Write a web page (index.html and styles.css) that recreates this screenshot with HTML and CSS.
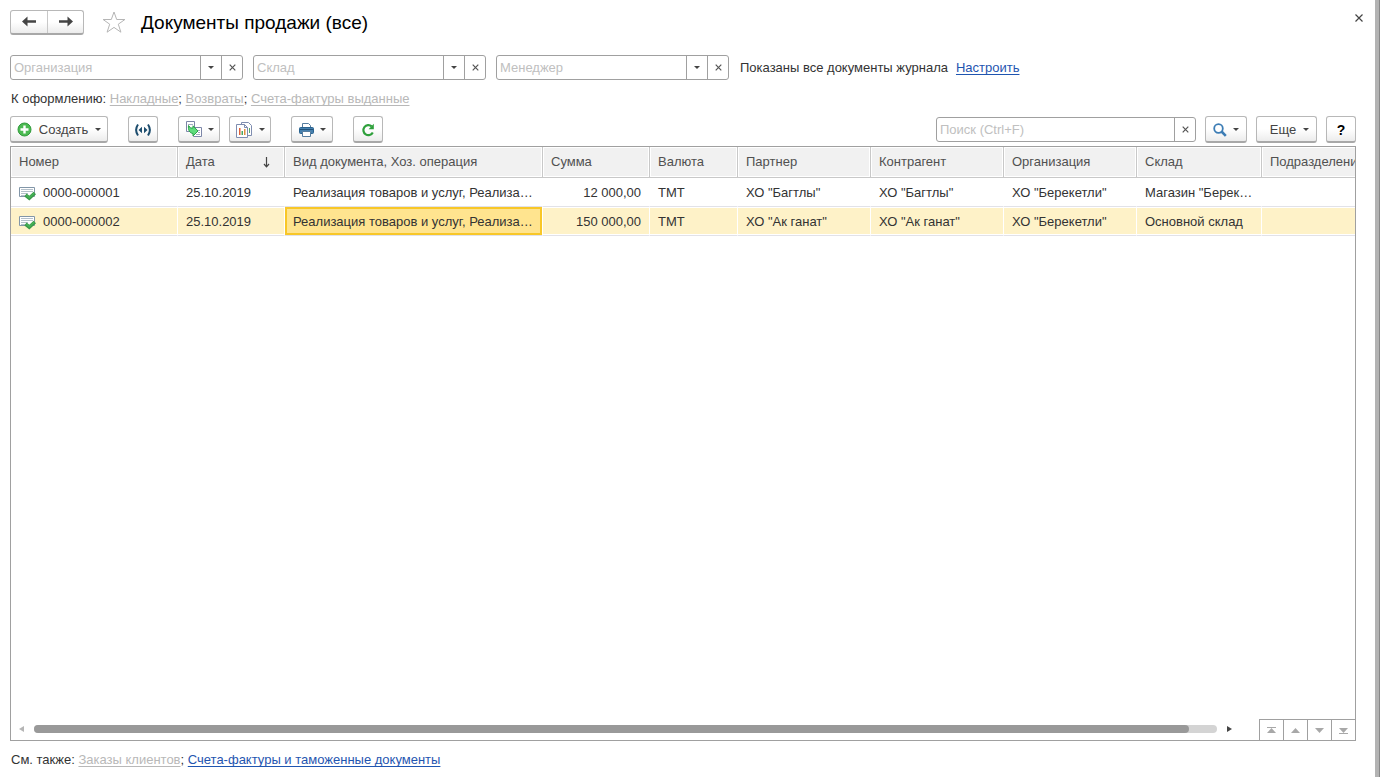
FILE: index.html
```html
<!DOCTYPE html>
<html lang="ru">
<head>
<meta charset="utf-8">
<title>Документы продажи (все)</title>
<link rel="stylesheet" href="styles.css">
</head>
<body>
<svg class="symbols" aria-hidden="true">
  <symbol id="caret" viewBox="0 0 6 3"><path d="M0 0h6L3 3z" fill="currentColor"/></symbol>
  <symbol id="cross" viewBox="0 0 7 7"><path d="M.7.7l5.600 5.600M6.300.7L.7 6.300" stroke="currentColor" stroke-width="1.200" fill="none"/></symbol>
  <symbol id="posted" viewBox="0 0 17 15"><path d="M.5 1.500h15v9H.5z" fill="#fff" stroke="#8296a8"/><path d="M2 3.500h12M2 5.500h12M2 7.500h7M2 9.500h6" stroke="#b4c0ca"/><path d="M6.500 9l3.800 3.200L15.800 7" fill="none" stroke="#3a9a48" stroke-width="3.600"/><path d="M7.300 9.200l3 2.500 4.800-4.500" fill="none" stroke="#46b257" stroke-width="1.600"/></symbol>
</svg>
<main class="window">
  <header class="title-bar">
    <div class="history">
      <button class="history-btn" type="button" aria-label="Назад"><svg width="14" height="11" viewBox="0 0 14 11"><path d="M0 5.500L5.500.5v3.700H14v2.600H5.500v3.700z" fill="#444"/></svg></button>
      <button class="history-btn" type="button" aria-label="Вперед"><svg width="14" height="11" viewBox="0 0 14 11"><path d="M14 5.500L8.500.5v3.700H0v2.600h8.500v3.700z" fill="#444"/></svg></button>
    </div>
    <button class="star" type="button" aria-label="В избранное"><svg width="24" height="22" viewBox="0 0 24 22"><path d="M12 1l2.700 7.500h8.200l-6.600 4.700 2.600 8L12 16.400l-6.900 4.800 2.600-8L1.100 8.500h8.200z" fill="#fff" stroke="#b5b5b5"/></svg></button>
    <h1 class="title">Документы продажи (все)</h1>
    <button class="close" type="button" aria-label="Закрыть"><svg width="8" height="8" viewBox="0 0 8 8"><path d="M.5.5l7 7M7.500.5l-7 7" stroke="#444" stroke-width="1.200"/></svg></button>
  </header>

  <div class="filters">
    <div class="field"><input class="field-input" type="text" placeholder="Организация" aria-label="Организация"><button class="field-btn" type="button" aria-label="Выбрать"><svg class="caret"><use href="#caret"/></svg></button><button class="field-btn" type="button" aria-label="Очистить"><svg class="cross"><use href="#cross"/></svg></button></div>
    <div class="field"><input class="field-input" type="text" placeholder="Склад" aria-label="Склад"><button class="field-btn" type="button" aria-label="Выбрать"><svg class="caret"><use href="#caret"/></svg></button><button class="field-btn" type="button" aria-label="Очистить"><svg class="cross"><use href="#cross"/></svg></button></div>
    <div class="field"><input class="field-input" type="text" placeholder="Менеджер" aria-label="Менеджер"><button class="field-btn" type="button" aria-label="Выбрать"><svg class="caret"><use href="#caret"/></svg></button><button class="field-btn" type="button" aria-label="Очистить"><svg class="cross"><use href="#cross"/></svg></button></div>
    <span class="filter-note">Показаны все документы журнала</span>
    <a class="link" href="#">Настроить</a>
  </div>

  <p class="links-line">К оформлению: <a class="link muted" href="#">Накладные</a>; <a class="link muted" href="#">Возвраты</a>; <a class="link muted" href="#">Счета-фактуры выданные</a></p>

  <div class="toolbar">
    <button class="btn create" type="button"><svg width="15" height="15" viewBox="0 0 15 15"><circle cx="7.500" cy="7.500" r="6.500" fill="#4cba52" stroke="#2f9a3a"/><path d="M7.500 3.500v8M3.500 7.500h8" stroke="#fff" stroke-width="2.400"/></svg><span>Создать</span><svg class="caret"><use href="#caret"/></svg></button>
    <button class="btn square" type="button" aria-label="Обмен"><svg width="18" height="14" viewBox="0 0 18 14"><path d="M4 1.500Q.2 7 4 12.500M14 1.500Q17.800 7 14 12.500" fill="none" stroke="#1d4d6e" stroke-width="2"/><path d="M4.500 7L8 3.700v6.600zM13.500 7L10 3.700v6.600z" fill="#1d4d6e"/></svg></button>
    <button class="btn menu after" type="button" aria-label="Создать на основании"><svg width="17" height="17" viewBox="0 0 17 17"><path d="M1.500.5h8v10h-8z" fill="#fff" stroke="#7c86a8"/><path d="M3 3.500h5M3 5.500h2" stroke="#a4adc0"/><path d="M8.500 6.500h8v9h-8z" fill="#fff" stroke="#7c86a8"/><path d="M13 9.500h2M13 11.500h2M11 13.500h4" stroke="#a4adc0"/><path d="M3.500 4.500l2 2.500L8 7V4.800l5 5.200-5 5v-2.500C4.500 12 3 9 3.500 4.500z" fill="#5fdc7c" stroke="#2ba34a"/></svg><svg class="caret"><use href="#caret"/></svg></button>
    <button class="btn menu near" type="button" aria-label="Отчеты"><svg width="17" height="16" viewBox="0 0 17 16"><path d="M5.500.5h7l3 3v10h-10z" fill="#fff" stroke="#7f8db0"/><path d="M13.500 6v5" stroke="#5aa66c"/><path d="M.5 2.500h8l3 3v10H.5z" fill="#fff" stroke="#7f8db0"/><path d="M8.500 2.500v3h3" fill="none" stroke="#7f8db0"/><path d="M3 6h1.500v7H3z" fill="#e06038"/><path d="M5.500 9H7v4H5.500z" fill="#48a860"/><path d="M8 7h1.500v6H8z" fill="#e09040"/></svg><svg class="caret"><use href="#caret"/></svg></button>
    <button class="btn menu after" type="button" aria-label="Печать"><svg width="15" height="14" viewBox="0 0 15 14"><path d="M3.500 5V.5h6l2 2V5" fill="#fff" stroke="#567d9f"/><rect x=".5" y="4.500" width="14" height="6" rx="1" fill="#4580ae" stroke="#29628f"/><path d="M1 6.500h13" stroke="#205078"/><path d="M3.500 8.500h8v5h-8z" fill="#fff" stroke="#567d9f"/></svg><svg class="caret"><use href="#caret"/></svg></button>
    <button class="btn square after" type="button" aria-label="Обновить"><svg width="14" height="14" viewBox="0 0 14 14"><path d="M11.800 9.500A5 5 0 1 1 10.700 3.400" fill="none" stroke="#2fa03c" stroke-width="2.200"/><path d="M12.800.8v5.400H7.600z" fill="#2fa03c"/></svg></button>
    <div class="toolbar-end">
      <div class="field search"><input class="field-input" type="text" placeholder="Поиск (Ctrl+F)" aria-label="Поиск"><button class="field-btn" type="button" aria-label="Очистить"><svg class="cross"><use href="#cross"/></svg></button></div>
      <button class="btn menu" type="button" aria-label="Найти"><svg width="14" height="14" viewBox="0 0 14 14"><circle cx="5.500" cy="5.500" r="4.300" fill="#fff" stroke="#3d7db5" stroke-width="1.800"/><path d="M8.500 8.500l4.300 4.300" stroke="#3d7db5" stroke-width="2.600"/></svg><svg class="caret"><use href="#caret"/></svg></button>
      <button class="btn more" type="button"><span>Еще</span><svg class="caret"><use href="#caret"/></svg></button>
      <button class="btn square help" type="button">?</button>
    </div>
  </div>

  <section class="journal">
    <div class="table-area">
      <table class="grid">
        <colgroup><col class="c-number"><col class="c-date"><col class="c-kind"><col class="c-sum"><col class="c-cur"><col class="c-party"><col class="c-party"><col class="c-party"><col class="c-store"><col class="c-party"></colgroup>
        <thead>
          <tr><th>Номер</th><th><span class="sorted">Дата<svg width="7" height="11" viewBox="0 0 7 11"><path d="M3.500 0v9.500M1 7l2.500 2.800L6 7" fill="none" stroke="#444" stroke-width="1.200"/></svg></span></th><th>Вид документа, Хоз. операция</th><th>Сумма</th><th>Валюта</th><th>Партнер</th><th>Контрагент</th><th>Организация</th><th>Склад</th><th>Подразделение</th></tr>
        </thead>
        <tbody>
          <tr><td><span class="doc"><svg width="17" height="15"><use href="#posted"/></svg>0000-000001</span></td><td>25.10.2019</td><td>Реализация товаров и услуг, Реализа…</td><td class="num">12 000,00</td><td>ТМТ</td><td>ХО "Багтлы"</td><td>ХО "Багтлы"</td><td>ХО "Берекетли"</td><td>Магазин "Берек…</td><td></td></tr>
          <tr class="selected"><td><span class="doc"><svg width="17" height="15"><use href="#posted"/></svg>0000-000002</span></td><td>25.10.2019</td><td class="current">Реализация товаров и услуг, Реализа…</td><td class="num">150 000,00</td><td>ТМТ</td><td>ХО "Ак ганат"</td><td>ХО "Ак ганат"</td><td>ХО "Берекетли"</td><td>Основной склад</td><td></td></tr>
        </tbody>
      </table>
    </div>
    <div class="journal-foot">
      <div class="scroller">
        <svg width="5" height="6" viewBox="0 0 5 6"><path d="M5 0v6L0 3z" fill="#b5b5b5"/></svg>
        <div class="track"><div class="thumb"></div></div>
        <svg width="5" height="6" viewBox="0 0 5 6"><path d="M0 0v6l5-3z" fill="#444"/></svg>
      </div>
      <div class="pager">
        <button class="pager-btn" type="button" aria-label="В начало"><svg width="9" height="7" viewBox="0 0 9 7"><path d="M0 .5h9" stroke="#a8a8a8"/><path d="M4.500 1L9 6H0z" fill="#a8a8a8"/></svg></button>
        <button class="pager-btn" type="button" aria-label="Вверх"><svg width="9" height="5" viewBox="0 0 9 5"><path d="M4.500 0L9 5H0z" fill="#a8a8a8"/></svg></button>
        <button class="pager-btn" type="button" aria-label="Вниз"><svg width="9" height="5" viewBox="0 0 9 5"><path d="M0 0h9L4.500 5z" fill="#a8a8a8"/></svg></button>
        <button class="pager-btn" type="button" aria-label="В конец"><svg width="9" height="7" viewBox="0 0 9 7"><path d="M0 1h9L4.500 6z" fill="#a8a8a8"/><path d="M0 6.500h9" stroke="#a8a8a8"/></svg></button>
      </div>
    </div>
  </section>

  <p class="see-also">См. также: <a class="link muted" href="#">Заказы клиентов</a>; <a class="link" href="#">Счета-фактуры и таможенные документы</a></p>
</main>
</body>
</html>
```
FILE: styles.css
```css
* { box-sizing: border-box; }
body {
  margin: 0;
  font: 13px/16px "Liberation Sans", Arial, sans-serif;
  color: #333;
  background: #fff;
}
svg { display: block; flex: none; }
button, input { font: inherit; color: inherit; }
button { padding: 0; border: 0; background: none; display: flex; align-items: center; justify-content: center; }
.symbols { position: absolute; width: 0; height: 0; }
.window {
  display: flex;
  flex-direction: column;
  height: 100vh;
  padding: 9px 19px 9px 10px;
  border-right: 4px solid #b3b3b3;
  margin-right: 1px;
  box-shadow: 1px 0 #888;
}

.title-bar { display: flex; align-items: center; height: 26px; }
.history {
  display: flex;
  height: 25px;
  border: 1px solid #b8b8b8;
  border-bottom: 2px solid #a8a8a8;
  border-radius: 3px;
  background: linear-gradient(#fff 50%, #ececec);
}
.history-btn { width: 36px; }
.history-btn + .history-btn { border-left: 1px solid #c8c8c8; }
.star { margin: 0 15px 0 18px; }
.title { margin: 0; padding-top: 2px; font-size: 19px; line-height: 24px; font-weight: 400; color: #000; }
.close { width: 16px; height: 16px; margin: 0 -11px 8px auto; }

.filters { display: flex; align-items: center; gap: 10px; margin-top: 20px; }
.field {
  display: flex;
  width: 233px;
  height: 25px;
  border: 1px solid #a0a0a0;
  border-radius: 3px;
  background: #fff;
}
.field-input { flex: 1; min-width: 0; padding: 0 3px; border: 0; background: none; outline: 0; }
.field-input::placeholder { color: #c0c0c0; opacity: 1; }
.field-btn { width: 21px; border-left: 1px solid #a0a0a0; color: #555; }
.cross { width: 7px; height: 7px; }
.caret { width: 6px; height: 3px; color: #444; }
.filter-note { margin-left: 1px; }
.filters .link { margin-left: -2px; }
.link { color: #1f55b0; text-decoration: underline; text-decoration-skip-ink: none; text-underline-offset: 2px; }
.link.muted { color: #b8b8b8; }
.links-line { margin: 11px 0 9px 1px; }

.toolbar { display: flex; align-items: center; }
.toolbar-end { display: flex; align-items: center; gap: 9px; margin-left: auto; }
.btn {
  height: 27px;
  padding-top: 1px;
  border: 1px solid #b8b8b8;
  border-bottom: 2px solid #a8a8a8;
  border-radius: 3px;
  background: linear-gradient(#fff 50%, #ececec);
  color: #444;
}
.create { width: 98px; gap: 7px; margin-right: 20px; }
.square { width: 30px; }
.menu { width: 42px; gap: 6px; }
.after { margin-left: 20px; }
.near { margin-left: 9px; }
.more { width: 61px; gap: 7px; padding-left: 6px; }
.help { font-weight: 700; font-size: 14px; color: #000; }
.search { width: 260px; }

.journal {
  flex: 1;
  display: flex;
  flex-direction: column;
  min-height: 0;
  margin-top: 3px;
  border: 1px solid #a0a0a0;
}
.table-area { flex: 1; overflow: hidden; }
.grid { width: 1383px; table-layout: fixed; border-collapse: separate; border-spacing: 0; }
.c-number { width: 166px; }
.c-date, .c-sum { width: 107px; }
.c-kind { width: 258px; }
.c-cur { width: 88px; }
.c-party { width: 133px; }
.c-store { width: 125px; }
.grid th, .grid td { padding: 0 8px; overflow: hidden; white-space: nowrap; text-overflow: ellipsis; text-align: left; font-weight: 400; }
.grid th { height: 31px; background: #f1f1f1; color: #505050; border-bottom: 1px solid #c8c8c8; box-shadow: inset 0 0 0 1px #fff; }
.grid th + th { border-left: 1px solid #c8c8c8; }
.grid td { height: 29px; padding-top: 2px; border-bottom: 1px solid #e2e2e8; }
.grid td + td { border-left: 1px solid #fff; }
.grid .num { text-align: right; }
.selected td { background: #fef2c8; box-shadow: inset 0 1px #fff, inset 0 -1px #fff; }
.grid .selected .current { background: #ffe48f; box-shadow: inset 0 0 0 2px #f8c728; }
.sorted { display: flex; align-items: center; justify-content: space-between; padding-right: 6px; }
.doc { display: flex; align-items: center; gap: 7px; }

.journal-foot { display: flex; align-items: flex-end; height: 22px; }
.scroller { flex: 1; display: flex; align-items: center; gap: 10px; height: 22px; padding: 0 27px 0 8px; }
.track { flex: 1; height: 8px; border-radius: 4px; background: #d4d4d4; }
.thumb { width: 97.6%; height: 8px; border-radius: 4px; background: #999; }
.pager { display: flex; height: 21px; border-top: 1px solid #a0a0a0; }
.pager-btn { width: 24px; border-left: 1px solid #a0a0a0; }
.see-also { margin: 11px 0 0 1px; }
```
